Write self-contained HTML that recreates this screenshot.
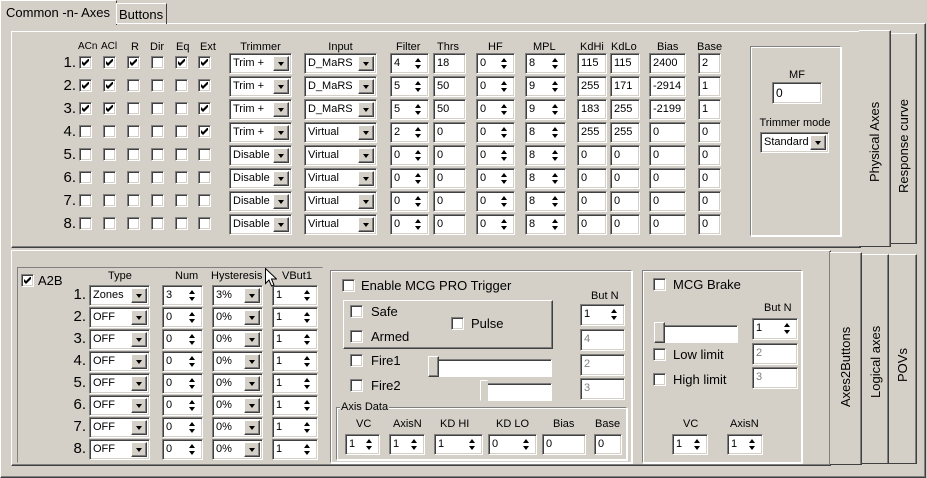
<!DOCTYPE html><html><head><meta charset="utf-8"><style>
*{box-sizing:border-box}
body{margin:0;width:927px;height:478px;background:#d4d0c8;font-family:"Liberation Sans",sans-serif;font-size:11px;color:#000;position:relative;overflow:hidden}
div,span{position:absolute}
.rs{border:1px solid;border-color:#fff #404040 #404040 #fff;box-shadow:inset -1px -1px #808080}
.e{height:21px;background:#fff;border:1px solid;border-color:#808080 #fff #fff #808080;box-shadow:inset 1px 1px #404040,inset -1px -1px #d4d0c8;padding:3px 0 0 3px;white-space:nowrap;overflow:hidden}
.e.g{color:#808080}
.b{right:2px;top:2px;width:16px;height:15px;background:#d4d0c8;border:1px solid;border-color:#fff #404040 #404040 #fff;box-shadow:inset -1px -1px #808080}
.b:after{content:"";position:absolute;left:4px;top:5px;border-left:3px solid transparent;border-right:3px solid transparent;border-top:4px solid #000}
.u,.d{right:7px;width:0;height:0;border-left:3px solid transparent;border-right:3px solid transparent}
.u{top:4px;border-bottom:4px solid #000}.d{top:11px;border-top:4px solid #000}
.k{width:13px;height:13px;background:#fff;border:1px solid;border-color:#808080 #fff #fff #808080;box-shadow:inset 1px 1px #404040,inset -1px -1px #d4d0c8}
.k svg{position:absolute;left:2px;top:2px}
.n{font-size:15px;text-align:right;width:24px}
.h{text-align:center}
.gb{border:1px solid;border-color:#808080 #fff #fff #808080;box-shadow:1px 1px #fff,inset 1px 1px #fff}
.v{writing-mode:vertical-rl;transform:rotate(180deg);font-size:13px}
.L{font-size:13px}
.sl{height:18px;background:#fff;border:1px solid;border-color:#808080 #fff #fff #808080;box-shadow:inset 1px 1px #404040}
.th{width:11px;height:21px;background:#d4d0c8;border:1px solid;border-color:#fff #404040 #404040 #fff;box-shadow:inset -1px -1px #808080}
</style></head><body>
<!-- main tab page -->
<div class="rs" style="left:0;top:23px;width:926px;height:455px"></div>
<div style="left:0;top:0;width:117px;height:25px;background:#d4d0c8;border:1px solid;border-color:#fff #404040 transparent #fff;border-bottom:none"></div>
<span style="left:6px;top:5px;font-size:13px">Common -n- Axes</span>
<div style="left:116px;top:3px;width:51px;height:21px;border:1px solid;border-color:#fff #404040 transparent #fff;border-bottom:none"></div>
<span style="left:119px;top:7px;font-size:13px">Buttons</span>

<!-- top inner page -->
<div class="rs" style="left:11px;top:31px;width:850px;height:217px"></div>
<div style="left:859px;top:30px;width:32px;height:217px;border:1px solid;border-color:#fff #404040 #404040 transparent;border-left:none;background:#d4d0c8;box-shadow:inset -1px 0 #808080"></div>
<div class="v" style="left:862px;top:30px;width:26px;height:152px;line-height:26px;text-align:left">Physical Axes</div>
<div style="left:891px;top:33px;width:26px;height:211px;border:1px solid;border-color:#fff #404040 #404040 transparent;border-left:none;box-shadow:inset -1px 0 #808080"></div>
<div class="v" style="left:893px;top:33px;width:22px;height:160px;line-height:22px;text-align:left">Response curve</div>

<!-- headers -->
<span style="left:78px;top:41px;font-size:10px">ACn</span><span style="left:101px;top:41px;font-size:10px">ACl</span><span style="left:131px;top:41px">R</span><span style="left:150px;top:41px">Dir</span><span style="left:176px;top:41px">Eq</span><span style="left:200px;top:41px">Ext</span>
<span class="h" style="left:229px;top:41px;width:63px">Trimmer</span><span class="h" style="left:304px;top:41px;width:73px">Input</span><span style="left:396px;top:41px">Filter</span><span style="left:437px;top:41px">Thrs</span><span style="left:488px;top:41px">HF</span><span style="left:533px;top:41px">MPL</span><span style="left:580px;top:41px">KdHi</span><span style="left:611px;top:41px">KdLo</span><span style="left:657px;top:41px">Bias</span><span style="left:697px;top:41px">Base</span>

<!-- rows -->
<div style="left:0;top:53px;width:740px;height:22px"><span class="n" style="left:52px;top:1px">1.</span>
<div class="k" style="left:79px;top:3px"><svg width="7" height="7"><path d="M0 2l2 2 5-5v3l-5 5-2-2z"/></svg></div><div class="k" style="left:103px;top:3px"><svg width="7" height="7"><path d="M0 2l2 2 5-5v3l-5 5-2-2z"/></svg></div><div class="k" style="left:127px;top:3px"><svg width="7" height="7"><path d="M0 2l2 2 5-5v3l-5 5-2-2z"/></svg></div><div class="k" style="left:151px;top:3px"></div><div class="k" style="left:175px;top:3px"><svg width="7" height="7"><path d="M0 2l2 2 5-5v3l-5 5-2-2z"/></svg></div><div class="k" style="left:198px;top:3px"><svg width="7" height="7"><path d="M0 2l2 2 5-5v3l-5 5-2-2z"/></svg></div>
<div class="e" style="left:229px;width:63px">Trim +<div class="b"></div></div><div class="e" style="left:304px;width:73px">D_MaRS<div class="b"></div></div><div class="e" style="left:390px;width:39px">4<i class="u" style="position:absolute"></i><i class="d" style="position:absolute"></i></div><div class="e" style="left:433px;width:33px">18</div><div class="e" style="left:476px;width:39px">0<i class="u" style="position:absolute"></i><i class="d" style="position:absolute"></i></div><div class="e" style="left:525px;width:41px">8<i class="u" style="position:absolute"></i><i class="d" style="position:absolute"></i></div><div class="e" style="left:577px;width:30px">115</div><div class="e" style="left:610px;width:30px">115</div><div class="e" style="left:649px;width:37px">2400</div><div class="e" style="left:698px;width:23px">2</div></div>

<div style="left:0;top:76px;width:740px;height:22px"><span class="n" style="left:52px;top:1px">2.</span>
<div class="k" style="left:79px;top:3px"><svg width="7" height="7"><path d="M0 2l2 2 5-5v3l-5 5-2-2z"/></svg></div><div class="k" style="left:103px;top:3px"><svg width="7" height="7"><path d="M0 2l2 2 5-5v3l-5 5-2-2z"/></svg></div><div class="k" style="left:127px;top:3px"></div><div class="k" style="left:151px;top:3px"></div><div class="k" style="left:175px;top:3px"></div><div class="k" style="left:198px;top:3px"><svg width="7" height="7"><path d="M0 2l2 2 5-5v3l-5 5-2-2z"/></svg></div>
<div class="e" style="left:229px;width:63px">Trim +<div class="b"></div></div><div class="e" style="left:304px;width:73px">D_MaRS<div class="b"></div></div><div class="e" style="left:390px;width:39px">5<i class="u" style="position:absolute"></i><i class="d" style="position:absolute"></i></div><div class="e" style="left:433px;width:33px">50</div><div class="e" style="left:476px;width:39px">0<i class="u" style="position:absolute"></i><i class="d" style="position:absolute"></i></div><div class="e" style="left:525px;width:41px">9<i class="u" style="position:absolute"></i><i class="d" style="position:absolute"></i></div><div class="e" style="left:577px;width:30px">255</div><div class="e" style="left:610px;width:30px">171</div><div class="e" style="left:649px;width:37px">-2914</div><div class="e" style="left:698px;width:23px">1</div></div>

<div style="left:0;top:99px;width:740px;height:22px"><span class="n" style="left:52px;top:1px">3.</span>
<div class="k" style="left:79px;top:3px"><svg width="7" height="7"><path d="M0 2l2 2 5-5v3l-5 5-2-2z"/></svg></div><div class="k" style="left:103px;top:3px"><svg width="7" height="7"><path d="M0 2l2 2 5-5v3l-5 5-2-2z"/></svg></div><div class="k" style="left:127px;top:3px"></div><div class="k" style="left:151px;top:3px"></div><div class="k" style="left:175px;top:3px"></div><div class="k" style="left:198px;top:3px"><svg width="7" height="7"><path d="M0 2l2 2 5-5v3l-5 5-2-2z"/></svg></div>
<div class="e" style="left:229px;width:63px">Trim +<div class="b"></div></div><div class="e" style="left:304px;width:73px">D_MaRS<div class="b"></div></div><div class="e" style="left:390px;width:39px">5<i class="u" style="position:absolute"></i><i class="d" style="position:absolute"></i></div><div class="e" style="left:433px;width:33px">50</div><div class="e" style="left:476px;width:39px">0<i class="u" style="position:absolute"></i><i class="d" style="position:absolute"></i></div><div class="e" style="left:525px;width:41px">9<i class="u" style="position:absolute"></i><i class="d" style="position:absolute"></i></div><div class="e" style="left:577px;width:30px">183</div><div class="e" style="left:610px;width:30px">255</div><div class="e" style="left:649px;width:37px">-2199</div><div class="e" style="left:698px;width:23px">1</div></div>

<div style="left:0;top:122px;width:740px;height:22px"><span class="n" style="left:52px;top:1px">4.</span>
<div class="k" style="left:79px;top:3px"></div><div class="k" style="left:103px;top:3px"></div><div class="k" style="left:127px;top:3px"></div><div class="k" style="left:151px;top:3px"></div><div class="k" style="left:175px;top:3px"></div><div class="k" style="left:198px;top:3px"><svg width="7" height="7"><path d="M0 2l2 2 5-5v3l-5 5-2-2z"/></svg></div>
<div class="e" style="left:229px;width:63px">Trim +<div class="b"></div></div><div class="e" style="left:304px;width:73px">Virtual<div class="b"></div></div><div class="e" style="left:390px;width:39px">2<i class="u" style="position:absolute"></i><i class="d" style="position:absolute"></i></div><div class="e" style="left:433px;width:33px">0</div><div class="e" style="left:476px;width:39px">0<i class="u" style="position:absolute"></i><i class="d" style="position:absolute"></i></div><div class="e" style="left:525px;width:41px">8<i class="u" style="position:absolute"></i><i class="d" style="position:absolute"></i></div><div class="e" style="left:577px;width:30px">255</div><div class="e" style="left:610px;width:30px">255</div><div class="e" style="left:649px;width:37px">0</div><div class="e" style="left:698px;width:23px">0</div></div>

<div style="left:0;top:145px;width:740px;height:22px"><span class="n" style="left:52px;top:1px">5.</span>
<div class="k" style="left:79px;top:3px"></div><div class="k" style="left:103px;top:3px"></div><div class="k" style="left:127px;top:3px"></div><div class="k" style="left:151px;top:3px"></div><div class="k" style="left:175px;top:3px"></div><div class="k" style="left:198px;top:3px"></div>
<div class="e" style="left:229px;width:63px">Disable<div class="b"></div></div><div class="e" style="left:304px;width:73px">Virtual<div class="b"></div></div><div class="e" style="left:390px;width:39px">0<i class="u" style="position:absolute"></i><i class="d" style="position:absolute"></i></div><div class="e" style="left:433px;width:33px">0</div><div class="e" style="left:476px;width:39px">0<i class="u" style="position:absolute"></i><i class="d" style="position:absolute"></i></div><div class="e" style="left:525px;width:41px">8<i class="u" style="position:absolute"></i><i class="d" style="position:absolute"></i></div><div class="e" style="left:577px;width:30px">0</div><div class="e" style="left:610px;width:30px">0</div><div class="e" style="left:649px;width:37px">0</div><div class="e" style="left:698px;width:23px">0</div></div>

<div style="left:0;top:168px;width:740px;height:22px"><span class="n" style="left:52px;top:1px">6.</span>
<div class="k" style="left:79px;top:3px"></div><div class="k" style="left:103px;top:3px"></div><div class="k" style="left:127px;top:3px"></div><div class="k" style="left:151px;top:3px"></div><div class="k" style="left:175px;top:3px"></div><div class="k" style="left:198px;top:3px"></div>
<div class="e" style="left:229px;width:63px">Disable<div class="b"></div></div><div class="e" style="left:304px;width:73px">Virtual<div class="b"></div></div><div class="e" style="left:390px;width:39px">0<i class="u" style="position:absolute"></i><i class="d" style="position:absolute"></i></div><div class="e" style="left:433px;width:33px">0</div><div class="e" style="left:476px;width:39px">0<i class="u" style="position:absolute"></i><i class="d" style="position:absolute"></i></div><div class="e" style="left:525px;width:41px">8<i class="u" style="position:absolute"></i><i class="d" style="position:absolute"></i></div><div class="e" style="left:577px;width:30px">0</div><div class="e" style="left:610px;width:30px">0</div><div class="e" style="left:649px;width:37px">0</div><div class="e" style="left:698px;width:23px">0</div></div>

<div style="left:0;top:191px;width:740px;height:22px"><span class="n" style="left:52px;top:1px">7.</span>
<div class="k" style="left:79px;top:3px"></div><div class="k" style="left:103px;top:3px"></div><div class="k" style="left:127px;top:3px"></div><div class="k" style="left:151px;top:3px"></div><div class="k" style="left:175px;top:3px"></div><div class="k" style="left:198px;top:3px"></div>
<div class="e" style="left:229px;width:63px">Disable<div class="b"></div></div><div class="e" style="left:304px;width:73px">Virtual<div class="b"></div></div><div class="e" style="left:390px;width:39px">0<i class="u" style="position:absolute"></i><i class="d" style="position:absolute"></i></div><div class="e" style="left:433px;width:33px">0</div><div class="e" style="left:476px;width:39px">0<i class="u" style="position:absolute"></i><i class="d" style="position:absolute"></i></div><div class="e" style="left:525px;width:41px">8<i class="u" style="position:absolute"></i><i class="d" style="position:absolute"></i></div><div class="e" style="left:577px;width:30px">0</div><div class="e" style="left:610px;width:30px">0</div><div class="e" style="left:649px;width:37px">0</div><div class="e" style="left:698px;width:23px">0</div></div>

<div style="left:0;top:214px;width:740px;height:22px"><span class="n" style="left:52px;top:1px">8.</span>
<div class="k" style="left:79px;top:3px"></div><div class="k" style="left:103px;top:3px"></div><div class="k" style="left:127px;top:3px"></div><div class="k" style="left:151px;top:3px"></div><div class="k" style="left:175px;top:3px"></div><div class="k" style="left:198px;top:3px"></div>
<div class="e" style="left:229px;width:63px">Disable<div class="b"></div></div><div class="e" style="left:304px;width:73px">Virtual<div class="b"></div></div><div class="e" style="left:390px;width:39px">0<i class="u" style="position:absolute"></i><i class="d" style="position:absolute"></i></div><div class="e" style="left:433px;width:33px">0</div><div class="e" style="left:476px;width:39px">0<i class="u" style="position:absolute"></i><i class="d" style="position:absolute"></i></div><div class="e" style="left:525px;width:41px">8<i class="u" style="position:absolute"></i><i class="d" style="position:absolute"></i></div><div class="e" style="left:577px;width:30px">0</div><div class="e" style="left:610px;width:30px">0</div><div class="e" style="left:649px;width:37px">0</div><div class="e" style="left:698px;width:23px">0</div></div>

<!-- MF group -->
<div class="gb" style="left:750px;top:46px;width:91px;height:190px"></div>
<span class="h" style="left:772px;top:69px;width:50px">MF</span>
<div class="e" style="left:772px;top:82px;width:50px;height:22px;font-size:12px">0</div>
<span class="h" style="left:752px;top:117px;width:86px">Trimmer mode</span>
<div class="e" style="left:760px;top:132px;width:69px">Standard<div class="b"></div></div>

<!-- bottom inner page -->
<div class="rs" style="left:11px;top:250px;width:820px;height:216px"></div>
<div style="left:830px;top:252px;width:32px;height:213px;border:1px solid;border-color:#fff #404040 #404040 transparent;border-left:none;background:#d4d0c8;box-shadow:inset -1px 0 #808080"></div>
<div class="v" style="left:832px;top:252px;width:27px;height:155px;line-height:27px;text-align:left">Axes2Buttons</div>
<div style="left:862px;top:254px;width:27px;height:210px;border:1px solid;border-color:#fff #404040 #404040 transparent;border-left:none;box-shadow:inset -1px 0 #808080"></div>
<div class="v" style="left:864px;top:254px;width:23px;height:144px;line-height:23px;text-align:left">Logical axes</div>
<div style="left:889px;top:254px;width:28px;height:210px;border:1px solid;border-color:#fff #404040 #404040 transparent;border-left:none;box-shadow:inset -1px 0 #808080"></div>
<div class="v" style="left:891px;top:254px;width:24px;height:128px;line-height:24px;text-align:left">POVs</div>

<!-- A2B -->
<div class="gb" style="left:17px;top:267px;width:306px;height:196px;border-color:transparent;box-shadow:none;border-top:1px solid #808080;border-left:1px solid #808080"></div>
<div class="k" style="left:21px;top:274px"><svg width="7" height="7"><path d="M0 2l2 2 5-5v3l-5 5-2-2z"/></svg></div>
<span class="L" style="left:38px;top:273px">A2B</span>
<span style="left:108px;top:270px">Type</span><span style="left:175px;top:270px">Num</span><span style="left:211px;top:270px">Hysteresis</span><span style="left:282px;top:270px">VBut1</span>

<div style="left:0;top:285px;width:330px;height:22px"><span class="n" style="left:62px;top:1px">1.</span><div class="e" style="left:89px;width:61px;height:21px">Zones<div class="b"></div></div><div class="e" style="left:162px;width:41px">3<i class="u" style="position:absolute"></i><i class="d" style="position:absolute"></i></div><div class="e" style="left:212px;width:51px">3%<div class="b"></div></div><div class="e" style="left:272px;width:46px">1<i class="u" style="position:absolute"></i><i class="d" style="position:absolute"></i></div></div>
<div style="left:0;top:307px;width:330px;height:22px"><span class="n" style="left:62px;top:1px">2.</span><div class="e" style="left:89px;width:61px">OFF<div class="b"></div></div><div class="e" style="left:162px;width:41px">0<i class="u" style="position:absolute"></i><i class="d" style="position:absolute"></i></div><div class="e" style="left:212px;width:51px">0%<div class="b"></div></div><div class="e" style="left:272px;width:46px">1<i class="u" style="position:absolute"></i><i class="d" style="position:absolute"></i></div></div>
<div style="left:0;top:329px;width:330px;height:22px"><span class="n" style="left:62px;top:1px">3.</span><div class="e" style="left:89px;width:61px">OFF<div class="b"></div></div><div class="e" style="left:162px;width:41px">0<i class="u" style="position:absolute"></i><i class="d" style="position:absolute"></i></div><div class="e" style="left:212px;width:51px">0%<div class="b"></div></div><div class="e" style="left:272px;width:46px">1<i class="u" style="position:absolute"></i><i class="d" style="position:absolute"></i></div></div>
<div style="left:0;top:351px;width:330px;height:22px"><span class="n" style="left:62px;top:1px">4.</span><div class="e" style="left:89px;width:61px">OFF<div class="b"></div></div><div class="e" style="left:162px;width:41px">0<i class="u" style="position:absolute"></i><i class="d" style="position:absolute"></i></div><div class="e" style="left:212px;width:51px">0%<div class="b"></div></div><div class="e" style="left:272px;width:46px">1<i class="u" style="position:absolute"></i><i class="d" style="position:absolute"></i></div></div>
<div style="left:0;top:373px;width:330px;height:22px"><span class="n" style="left:62px;top:1px">5.</span><div class="e" style="left:89px;width:61px">OFF<div class="b"></div></div><div class="e" style="left:162px;width:41px">0<i class="u" style="position:absolute"></i><i class="d" style="position:absolute"></i></div><div class="e" style="left:212px;width:51px">0%<div class="b"></div></div><div class="e" style="left:272px;width:46px">1<i class="u" style="position:absolute"></i><i class="d" style="position:absolute"></i></div></div>
<div style="left:0;top:395px;width:330px;height:22px"><span class="n" style="left:62px;top:1px">6.</span><div class="e" style="left:89px;width:61px">OFF<div class="b"></div></div><div class="e" style="left:162px;width:41px">0<i class="u" style="position:absolute"></i><i class="d" style="position:absolute"></i></div><div class="e" style="left:212px;width:51px">0%<div class="b"></div></div><div class="e" style="left:272px;width:46px">1<i class="u" style="position:absolute"></i><i class="d" style="position:absolute"></i></div></div>
<div style="left:0;top:417px;width:330px;height:22px"><span class="n" style="left:62px;top:1px">7.</span><div class="e" style="left:89px;width:61px">OFF<div class="b"></div></div><div class="e" style="left:162px;width:41px">0<i class="u" style="position:absolute"></i><i class="d" style="position:absolute"></i></div><div class="e" style="left:212px;width:51px">0%<div class="b"></div></div><div class="e" style="left:272px;width:46px">1<i class="u" style="position:absolute"></i><i class="d" style="position:absolute"></i></div></div>
<div style="left:0;top:439px;width:330px;height:22px"><span class="n" style="left:62px;top:1px">8.</span><div class="e" style="left:89px;width:61px">OFF<div class="b"></div></div><div class="e" style="left:162px;width:41px">0<i class="u" style="position:absolute"></i><i class="d" style="position:absolute"></i></div><div class="e" style="left:212px;width:51px">0%<div class="b"></div></div><div class="e" style="left:272px;width:46px">1<i class="u" style="position:absolute"></i><i class="d" style="position:absolute"></i></div></div>

<!-- cursor -->
<svg style="position:absolute;left:265px;top:268px" width="12" height="19"><path d="M0.5 0.5V15.5L4 12L6.5 18L9 17L6.5 11H11.5Z" fill="#fff" stroke="#000"/></svg>

<!-- MCG PRO group -->
<div class="gb" style="left:330px;top:270px;width:302px;height:193px"></div>
<div class="k" style="left:342px;top:279px"></div><span class="L" style="left:361px;top:278px">Enable MCG PRO Trigger</span>
<div class="rs" style="left:343px;top:300px;width:210px;height:49px"></div>
<div class="k" style="left:350px;top:305px"></div><span class="L" style="left:371px;top:304px">Safe</span>
<div class="k" style="left:350px;top:330px"></div><span class="L" style="left:371px;top:329px">Armed</span>
<div class="k" style="left:451px;top:317px"></div><span class="L" style="left:471px;top:316px">Pulse</span>
<div class="k" style="left:350px;top:354px"></div><span class="L" style="left:371px;top:353px">Fire1</span>
<div class="k" style="left:350px;top:379px"></div><span class="L" style="left:371px;top:378px">Fire2</span>
<div class="sl" style="left:432px;top:359px;width:120px"></div><div class="th" style="left:428px;top:356px"></div>
<div class="sl" style="left:486px;top:383px;width:66px"></div><div class="th" style="left:480px;top:380px;border-color:#fff #d4d0c8 #d4d0c8 #fff;box-shadow:none;width:8px"></div>
<span style="left:591px;top:290px">But N</span>
<div class="e" style="left:580px;top:304px;width:45px;height:22px">1<i class="u" style="position:absolute"></i><i class="d" style="position:absolute"></i></div>
<div class="e g" style="left:580px;top:329px;width:45px;height:22px">4</div>
<div class="e g" style="left:580px;top:354px;width:45px;height:22px">2</div>
<div class="e g" style="left:580px;top:378px;width:45px;height:22px">3</div>
<div class="gb" style="left:336px;top:407px;width:291px;height:53px"></div>
<span style="left:340px;top:401px;background:#d4d0c8;padding:0 1px">Axis Data</span>
<span style="left:356px;top:418px">VC</span><span style="left:393px;top:418px">AxisN</span><span style="left:440px;top:418px">KD HI</span><span style="left:496px;top:418px">KD LO</span><span style="left:553px;top:418px">Bias</span><span style="left:595px;top:418px">Base</span>
<div class="e" style="left:345px;top:434px;width:35px">1<i class="u" style="position:absolute"></i><i class="d" style="position:absolute"></i></div>
<div class="e" style="left:389px;top:434px;width:36px">1<i class="u" style="position:absolute"></i><i class="d" style="position:absolute"></i></div>
<div class="e" style="left:434px;top:434px;width:49px">1<i class="u" style="position:absolute"></i><i class="d" style="position:absolute"></i></div>
<div class="e" style="left:488px;top:434px;width:49px">0<i class="u" style="position:absolute"></i><i class="d" style="position:absolute"></i></div>
<div class="e" style="left:542px;top:434px;width:44px">0</div>
<div class="e" style="left:594px;top:434px;width:28px">0</div>

<!-- MCG Brake -->
<div class="gb" style="left:642px;top:270px;width:160px;height:193px"></div>
<div class="k" style="left:653px;top:278px"></div><span class="L" style="left:673px;top:277px">MCG Brake</span>
<span style="left:764px;top:302px">But N</span>
<div class="e" style="left:752px;top:318px;width:46px;height:22px">1<i class="u" style="position:absolute"></i><i class="d" style="position:absolute"></i></div>
<div class="e g" style="left:752px;top:343px;width:46px;height:22px">2</div>
<div class="e g" style="left:752px;top:367px;width:46px;height:22px">3</div>
<div class="sl" style="left:658px;top:325px;width:80px"></div><div class="th" style="left:654px;top:322px"></div>
<div class="k" style="left:653px;top:348px"></div><span class="L" style="left:673px;top:347px">Low limit</span>
<div class="k" style="left:653px;top:373px"></div><span class="L" style="left:673px;top:372px">High limit</span>
<span style="left:683px;top:418px">VC</span><span style="left:730px;top:418px">AxisN</span>
<div class="e" style="left:672px;top:434px;width:36px">1<i class="u" style="position:absolute"></i><i class="d" style="position:absolute"></i></div>
<div class="e" style="left:727px;top:434px;width:36px">1<i class="u" style="position:absolute"></i><i class="d" style="position:absolute"></i></div>
</body></html>
